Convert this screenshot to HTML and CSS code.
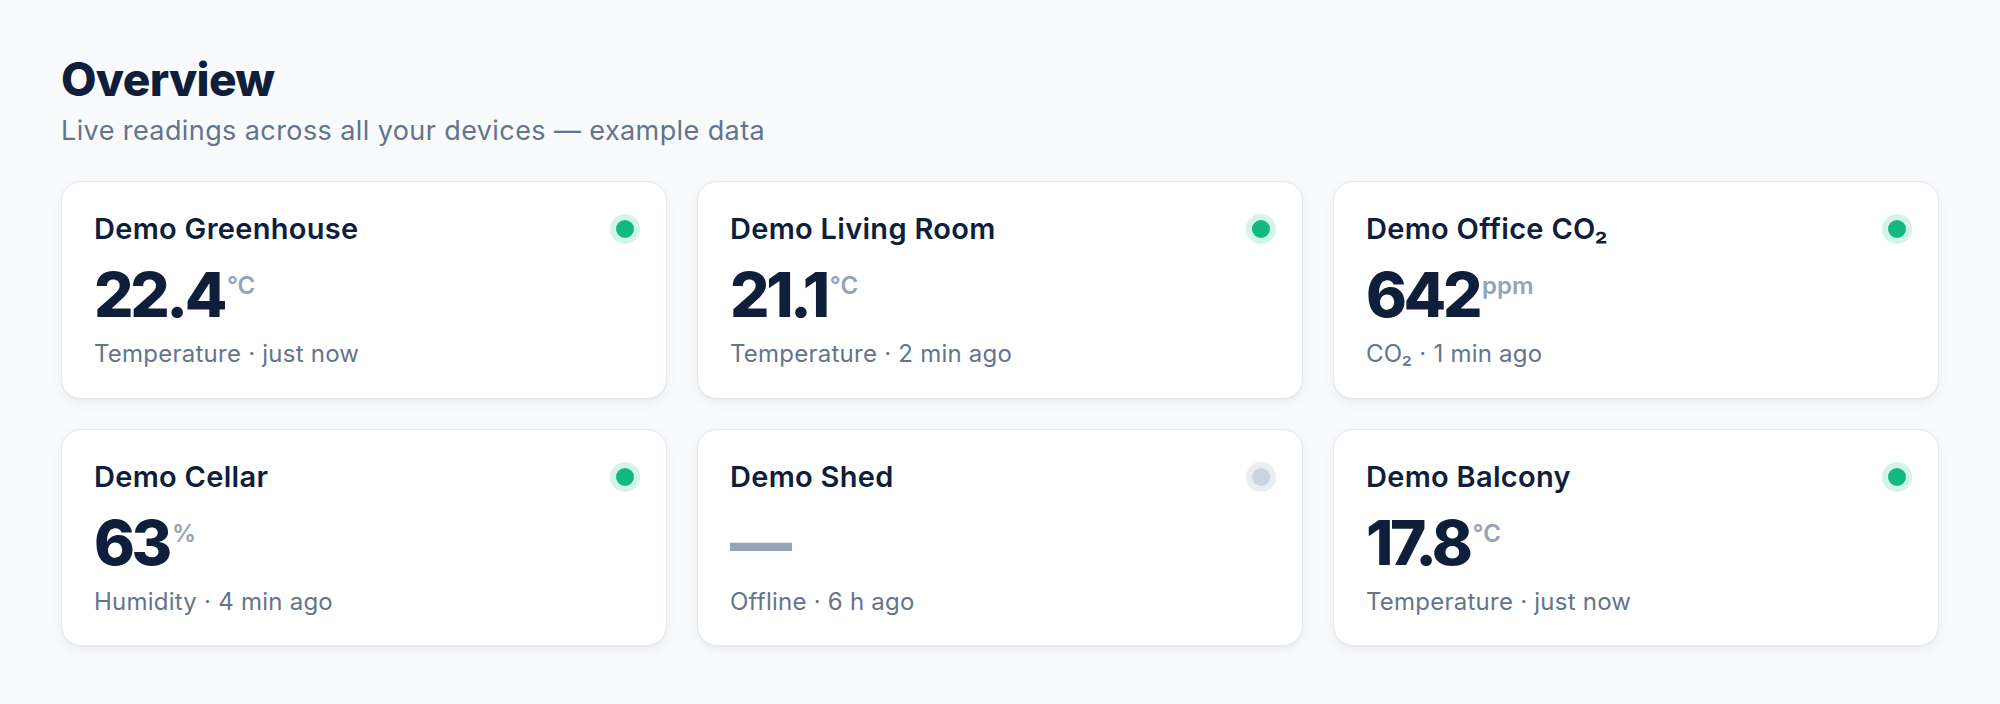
FILE: index.html
```html
<!DOCTYPE html>
<html lang="en">
<head>
<meta charset="utf-8">
<title>Overview</title>
<link rel="stylesheet" href="styles.css">
</head>
<body>
<main class="page">
  <header class="head">
    <h1 class="title">Overview</h1>
    <p class="subtitle">Live readings across all your devices — example data</p>
  </header>
  <section class="grid">
    <article class="card">
      <div class="card-top"><h2 class="name">Demo Greenhouse</h2><span class="dot on"></span></div>
      <div class="reading"><span class="value">22.4</span><span class="unit">°C</span></div>
      <p class="meta">Temperature · just now</p>
    </article>
    <article class="card">
      <div class="card-top"><h2 class="name">Demo Living Room</h2><span class="dot on"></span></div>
      <div class="reading"><span class="value">21.1</span><span class="unit">°C</span></div>
      <p class="meta">Temperature · 2 min ago</p>
    </article>
    <article class="card">
      <div class="card-top"><h2 class="name">Demo Office CO₂</h2><span class="dot on"></span></div>
      <div class="reading"><span class="value">642</span><span class="unit">ppm</span></div>
      <p class="meta">CO₂ · 1 min ago</p>
    </article>
    <article class="card">
      <div class="card-top"><h2 class="name">Demo Cellar</h2><span class="dot on"></span></div>
      <div class="reading"><span class="value">63</span><span class="unit">%</span></div>
      <p class="meta">Humidity · 4 min ago</p>
    </article>
    <article class="card">
      <div class="card-top"><h2 class="name">Demo Shed</h2><span class="dot off"></span></div>
      <div class="reading"><span class="value empty">—</span></div>
      <p class="meta">Offline · 6 h ago</p>
    </article>
    <article class="card">
      <div class="card-top"><h2 class="name">Demo Balcony</h2><span class="dot on"></span></div>
      <div class="reading"><span class="value">17.8</span><span class="unit">°C</span></div>
      <p class="meta">Temperature · just now</p>
    </article>
  </section>
</main>
</body>
</html>
```

FILE: styles.css
```css
* { box-sizing: border-box; }
html, body {
  margin: 0;
  padding: 0;
  background: #f8fafc;
}
body {
  font-family: Inter, "Noto Sans", "Liberation Sans", sans-serif;
  color: #0f1e3b;
}
.page {
  padding: 52px 61px;
}
.head {
  margin-bottom: 33px;
}
.title {
  margin: 0;
  font-size: 46px;
  line-height: 1.2;
  font-weight: 800;
  letter-spacing: -0.015em;
  color: #0f1e3b;
}
.subtitle {
  margin: 6px 0 0;
  font-size: 27px;
  line-height: 35px;
  letter-spacing: 0.015em;
  color: #64748b;
}
.grid {
  display: grid;
  grid-template-columns: repeat(3, 1fr);
  gap: 30px;
}
.card {
  background: #ffffff;
  border: 1px solid #e2e8f0;
  border-radius: 20px;
  box-shadow: 0 1px 2px rgba(15, 23, 42, 0.04), 0 4px 12px rgba(15, 23, 42, 0.05);
  padding: 30px 32px 27px;
  display: flex;
  flex-direction: column;
}
.card-top {
  display: flex;
  align-items: center;
  justify-content: space-between;
}
.name {
  margin: 0;
  font-size: 29px;
  line-height: 34px;
  font-weight: 600;
  letter-spacing: 0.01em;
  color: #0f1e3b;
}
.dot {
  width: 18px;
  height: 18px;
  border-radius: 50%;
}
.dot.on {
  background: #10b981;
  box-shadow: 0 0 0 6px #d3f4e6;
}
.dot.off {
  background: #cbd5e1;
  box-shadow: 0 0 0 6px #e9edf2;
}
.reading {
  display: flex;
  align-items: flex-start;
  margin-top: 18px;
  height: 62px;
}
.value {
  font-size: 62px;
  line-height: 1;
  font-weight: 800;
  letter-spacing: -0.055em;
  color: #0f1e3b;
}
.value.empty {
  color: #94a3b8;
  letter-spacing: 0;
}
.unit {
  margin-left: 3px;
  margin-top: 10px;
  font-size: 24px;
  line-height: 1;
  font-weight: 600;
  color: #94a3b8;
}
.meta {
  margin: 11px 0 0;
  font-size: 24px;
  line-height: 1.4;
  letter-spacing: 0.01em;
  color: #64748b;
}
```
